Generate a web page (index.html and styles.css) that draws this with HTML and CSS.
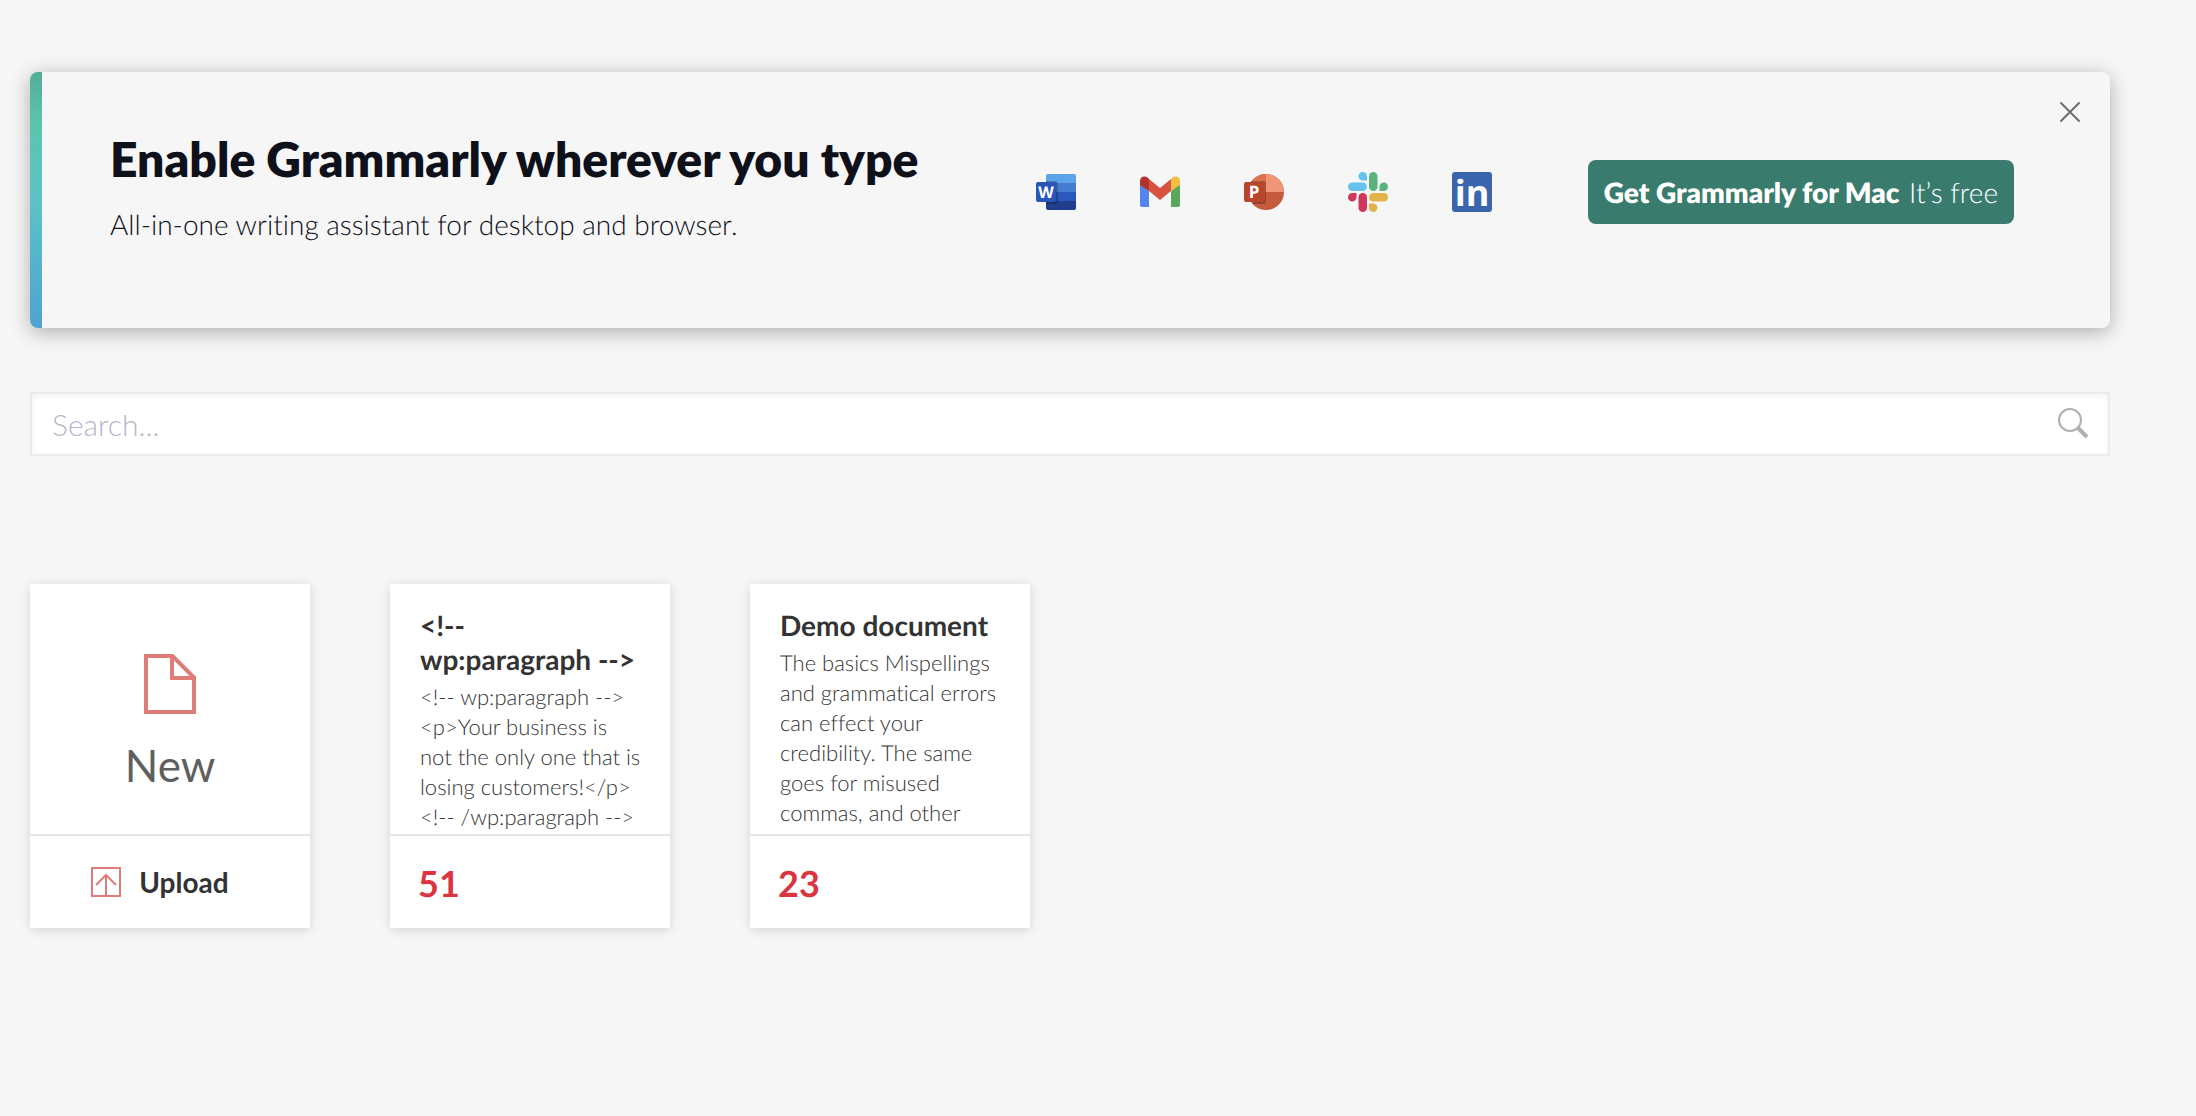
FILE: index.html
```html
<!DOCTYPE html>
<html lang="en">
<head>
    <meta charset="UTF-8">
    <meta name="viewport" content="width=device-width, initial-scale=1.0">
    <title>Grammarly</title>
    <link rel="stylesheet" href="styles.css">
</head>
<body>
    <main class="page">
        <section class="banner">
            <div class="banner-text">
                <h1>Enable Grammarly wherever you type</h1>
                <p>All-in-one writing assistant for desktop and browser.</p>
            </div>
            <div class="apps">
                <!-- Word -->
                <svg width="40" height="40" viewBox="0 0 40 40" role="img" aria-label="Word">
                    <path d="M12 2h26a2 2 0 0 1 2 2v7H10V4a2 2 0 0 1 2-2z" fill="#5ca4e9"/>
                    <path d="M10 11h30v9H10z" fill="#457cd0"/>
                    <path d="M10 20h30v9H10z" fill="#2b58bb"/>
                    <path d="M10 29h30v7a2 2 0 0 1-2 2H12a2 2 0 0 1-2-2z" fill="#1f3f8c"/>
                    <path d="M10 9h10a2 2 0 0 1 2 2v18a3 3 0 0 1-3 3h-9z" fill="#000" opacity=".22"/>
                    <rect y="10" width="20" height="20" rx="2" fill="#2a56b6"/>
                    <text class="letter" x="10" y="26" font-size="16">W</text>
                </svg>
                <!-- Gmail -->
                <svg width="40" height="40" viewBox="0 0 40 40" role="img" aria-label="Gmail">
                    <path d="M0 12l9 7v16H2a2 2 0 0 1-2-2z" fill="#5484ed"/>
                    <path d="M40 12l-9 7v16h7a2 2 0 0 0 2-2z" fill="#5aa75b"/>
                    <path d="M9 7l11 9 11-9v12l-11 9-11-9z" fill="#d95140"/>
                    <path d="M0 13V9c0-4 4-6 8-3l1 1v12z" fill="#b1332b"/>
                    <path d="M40 13V9c0-4-4-6-8-3l-1 1v12z" fill="#f1c042"/>
                </svg>
                <!-- PowerPoint -->
                <svg width="40" height="40" viewBox="0 0 40 40" role="img" aria-label="PowerPoint">
                    <circle cx="22" cy="20" r="18" fill="#c55a3c"/>
                    <path d="M22 2v18H4A18 18 0 0 1 22 2z" fill="#df7350"/>
                    <path d="M22 2a18 18 0 0 1 18 18H22z" fill="#f09575"/>
                    <path d="M7 9h13a2 2 0 0 1 2 2v18a3 3 0 0 1-3 3H9z" fill="#000" opacity=".25"/>
                    <rect y="10" width="21" height="20" rx="2" fill="#b7472a"/>
                    <text class="letter" x="10" y="26" font-size="17">P</text>
                </svg>
                <!-- Slack -->
                <svg width="40" height="40" viewBox="0 0 40 40" role="img" aria-label="Slack">
                    <path d="M19 8.500h-4.300A4.250 4.250 0 1 1 19 4.250z" fill="#65c2ec"/>
                    <rect y="10.500" width="19" height="8.500" rx="4.250" fill="#65c2ec"/>
                    <path d="M31.500 19v-4.300A4.250 4.250 0 1 1 35.750 19z" fill="#5ab37f"/>
                    <rect x="21" width="8.500" height="19" rx="4.250" fill="#5ab37f"/>
                    <path d="M21 31.500h4.300A4.250 4.250 0 1 1 21 35.750z" fill="#e3b34b"/>
                    <rect x="21" y="21" width="19" height="8.500" rx="4.250" fill="#e3b34b"/>
                    <path d="M8.500 21v4.300A4.250 4.250 0 1 1 4.250 21z" fill="#cf375c"/>
                    <rect x="10.500" y="21" width="8.500" height="19" rx="4.250" fill="#cf375c"/>
                </svg>
                <!-- LinkedIn -->
                <svg width="40" height="40" viewBox="0 0 40 40" role="img" aria-label="LinkedIn">
                    <rect width="40" height="40" rx="3" fill="#3b66ae"/>
                    <text class="letter" x="20" y="34" font-size="36">in</text>
                </svg>
            </div>
            <a class="get-app" href="#"><strong>Get Grammarly for Mac</strong> <span>It’s free</span></a>
            <button class="close" type="button" aria-label="Close">
                <svg width="20" height="20" viewBox="0 0 20 20">
                    <path d="M1 1l18 18M19 1L1 19"/>
                </svg>
            </button>
        </section>

        <form class="search">
            <input type="text" aria-label="Search" placeholder="Search...">
            <button type="submit" aria-label="Search">
                <svg width="32" height="32" viewBox="0 0 32 32">
                    <circle cx="12" cy="12" r="11" fill="none" stroke="#b0b0b0" stroke-width="2"/>
                    <path d="M20 20l9 9" stroke="#b0b0b0" stroke-width="4"/>
                </svg>
            </button>
        </form>

        <section class="documents">
            <div class="card">
                <button class="new" type="button">
                    <svg width="52" height="60" viewBox="0 0 52 60">
                        <path d="M2 2h26.500L50 23.500V58H2zM28 2v22h22" fill="none" stroke="#de7d77" stroke-width="4"/>
                    </svg>
                    New
                </button>
                <button class="upload" type="button">
                    <svg width="30" height="30" viewBox="0 0 30 30">
                        <path d="M1 1h28v28H1zM15 29V8M5 18L15 8l10 10" fill="none" stroke="#de7d77" stroke-width="2"/>
                    </svg>
                    Upload
                </button>
            </div>
            <article class="card">
                <a class="preview" href="#">
                    <h2>&lt;!-- wp:paragraph --&gt;</h2>
                    <p>
                        &lt;!-- wp:paragraph --&gt;<br>
                        &lt;p&gt;Your business is<br>
                        not the only one that is<br>
                        losing customers!&lt;/p&gt;<br>
                        &lt;!-- /wp:paragraph --&gt;
                    </p>
                </a>
                <div class="count">51</div>
            </article>
            <article class="card">
                <a class="preview" href="#">
                    <h2>Demo document</h2>
                    <p>
                        The basics Mispellings<br>
                        and grammatical errors<br>
                        can effect your<br>
                        credibility. The same<br>
                        goes for misused<br>
                        commas, and other
                    </p>
                </a>
                <div class="count">23</div>
            </article>
        </section>
    </main>
</body>
</html>
```

FILE: styles.css
```css
* {
    box-sizing: border-box;
}

body {
    margin: 0;
    background: #f6f6f6;
    color: #333;
    font-family: Lato, sans-serif;
    font-weight: 300;
    font-variant-ligatures: none;
    text-rendering: geometricPrecision;
}

h1, h2, p {
    margin: 0;
}

a {
    color: inherit;
    text-decoration: none;
}

button, input {
    border: none;
    background: none;
    padding: 0;
    color: inherit;
    font-family: inherit;
}

button {
    cursor: pointer;
}

svg {
    display: block;
    flex-shrink: 0;
    overflow: visible;
}

.page {
    padding: 72px 86px 72px 30px;
}

/* Banner */
.banner {
    position: relative;
    display: flex;
    align-items: center;
    padding: 58px 96px 74px 80px;
    border-radius: 8px;
    background: #f6f6f6;
    box-shadow: 0 4px 20px rgba(0, 0, 0, 0.3);
    overflow: hidden;
    color: #0e101a;
}

.banner::before {
    content: "";
    position: absolute;
    top: 0;
    bottom: 0;
    left: 0;
    width: 12px;
    background: linear-gradient(190deg, #53ac97, #5cc4ab 20%, #5bc3c6 50%, #56b6cb 70%, #4fa2d2);
}

.banner-text {
    padding-bottom: 10px;
}

.banner h1 {
    font-size: 48px;
    line-height: 60px;
    font-weight: 800;
}

.banner p {
    margin-top: 14px;
    font-size: 28px;
    line-height: 40px;
}

.apps {
    display: flex;
    gap: 64px;
    margin-left: auto;
    margin-right: 96px;
}

.letter {
    fill: #fff;
    font-family: "Open Sans", sans-serif;
    font-weight: 700;
    text-anchor: middle;
}

.get-app {
    padding: 12px 16px;
    border-radius: 8px;
    background: #397c6e;
    color: #fff;
    font-size: 28px;
    line-height: 40px;
    white-space: nowrap;
}

.get-app strong {
    margin-right: 2px;
    font-weight: 800;
}

.close {
    position: absolute;
    top: 22px;
    right: 22px;
    padding: 8px;
}

.close path {
    stroke: #6d6d6d;
    stroke-width: 2;
    stroke-linecap: round;
}

/* Search */
.search {
    display: flex;
    align-items: center;
    margin-top: 64px;
    padding: 0 18px 0 20px;
    border: 2px solid #ebebeb;
    background: #fff;
    box-shadow: inset 0 2px 6px rgba(0, 0, 0, 0.06);
}

.search input {
    flex: 1;
    height: 60px;
    font-size: 30px;
    font-weight: 300;
    outline: none;
}

.search input::placeholder {
    color: #b4b7c9;
    opacity: 1;
}

/* Documents */
.documents {
    display: flex;
    flex-wrap: wrap;
    gap: 80px;
    margin-top: 128px;
}

.card {
    display: flex;
    flex-direction: column;
    width: 280px;
    background: #fff;
    box-shadow: 0 2px 10px rgba(0, 0, 0, 0.14);
}

.new {
    display: flex;
    flex-direction: column;
    align-items: center;
    gap: 24px;
    height: 250px;
    padding-top: 70px;
    color: #5f5f5f;
    font-size: 44px;
    line-height: 54px;
    font-weight: 400;
}

.upload {
    display: flex;
    align-items: center;
    justify-content: center;
    gap: 18px;
    height: 94px;
    padding-right: 20px;
    border-top: 2px solid #e6e6e6;
    font-size: 28px;
    font-weight: 700;
}

.preview {
    height: 250px;
    padding: 24px 30px 0;
    overflow: hidden;
}

.preview h2 {
    font-size: 28px;
    line-height: 34px;
    font-weight: 700;
}

.preview p {
    margin-top: 6px;
    font-size: 22px;
    line-height: 30px;
    white-space: nowrap;
}

.count {
    height: 94px;
    padding: 0 28px;
    border-top: 2px solid #e6e6e6;
    color: #db3340;
    font-size: 36px;
    line-height: 94px;
    font-weight: 700;
}
```
